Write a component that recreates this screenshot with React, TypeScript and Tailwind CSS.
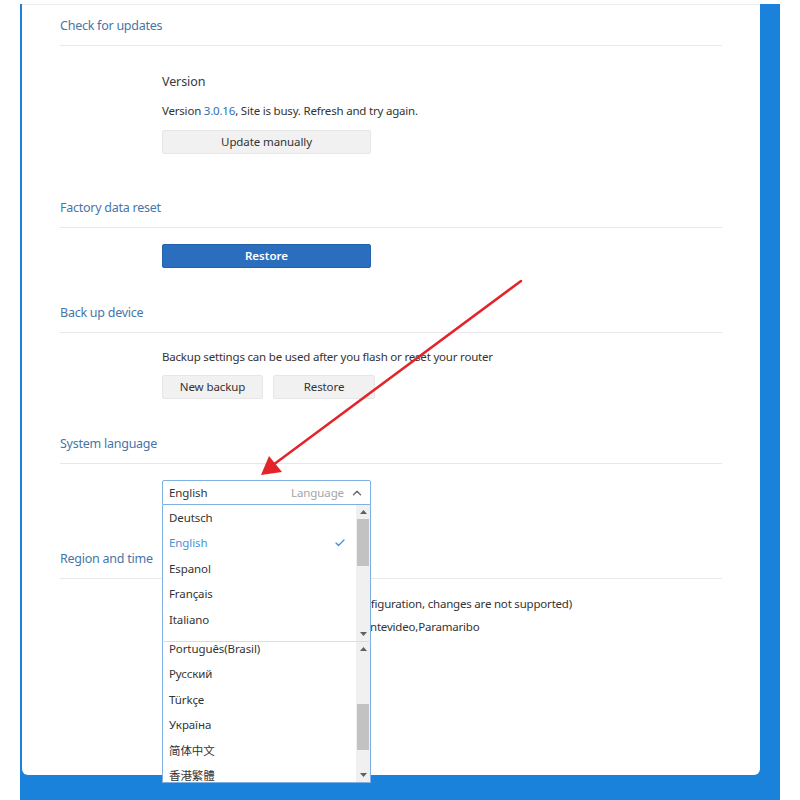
import { Check, ChevronUp } from "lucide-react";

const font = { fontFamily: '"Noto Sans", "Noto Sans CJK SC", sans-serif' };

const SectionHeader = ({ title }: { title: string }) => (
  <div className="h-[39px] flex items-center border-b border-[#e8e8e8] text-[12.5px] tracking-[-0.25px] text-[#4775a8]">
    {title}
  </div>
);

const GrayButton = ({ label, width }: { label: string; width: string }) => (
  <button
    className={`${width} h-[24px] bg-[#f1f1f1] border border-[#e6e6e6] rounded-[2px] text-[11.5px] tracking-[-0.1px] text-[#333] flex items-center justify-center`}
  >
    {label}
  </button>
);

const Arrow = ({ up }: { up?: boolean }) => (
  <svg width="7" height="4" viewBox="0 0 7 4" className="mx-auto">
    {up ? <polygon points="0,4 7,4 3.5,0" fill="#606060" /> : <polygon points="0,0 7,0 3.5,4" fill="#606060" />}
  </svg>
);

const Scrollbar = ({ thumbTop, thumbHeight }: { thumbTop: number; thumbHeight: number }) => (
  <div className="w-[14px] bg-[#f0f0f0] flex flex-col justify-between py-[5px] relative h-full">
    <Arrow up />
    <div className="absolute left-[1px] right-[1px] bg-[#c2c2c2]" style={{ top: thumbTop, height: thumbHeight }} />
    <Arrow />
  </div>
);

const Item = ({ label, active }: { label: string; active?: boolean }) => (
  <div className={`h-[25.4px] shrink-0 flex items-center justify-between pl-[6px] pr-[10px] text-[11.5px] tracking-[-0.1px] ${active ? "text-[#4a8fd6]" : "text-[#333]"}`}>
    <span>{label}</span>
    {active && <Check size={12} strokeWidth={2.5} className="text-[#4a8fd6]" />}
  </div>
);

const languagesTop = ["Deutsch", "English", "Espanol", "Français", "Italiano"];
const languagesBottom = ["Português(Brasil)", "Русский", "Türkçe", "Україна", "简体中文", "香港繁體"];

const body = "h-[20px] leading-[20px] text-[11.5px] tracking-[-0.2px] text-[#333] whitespace-nowrap";

export default function App() {
  return (
    <div className="w-[800px] h-[800px] bg-white relative overflow-hidden" style={font}>
      <div className="ml-[20px] mt-[4px] w-[760px] h-[796px] bg-[#1b82dc] pl-[2px] pr-[20px]">
        <div className="w-[738px] h-[771px] bg-white rounded-b-[6px] border-t border-[#ececec] px-[38px] pt-[2px]">
          {/* Check for updates */}
          <SectionHeader title="Check for updates" />
          <div className="pl-[102px]">
            <div className="mt-[26px] h-[20px] leading-[20px] text-[12.5px] tracking-[-0.1px] text-[#3a3a3a]">Version</div>
            <div className={`mt-[9px] ${body}`}>
              Version <span className="text-[#2f6db5]">3.0.16</span>, Site is busy. Refresh and try again.
            </div>
            <div className="mt-[9px]">
              <GrayButton label="Update manually" width="w-[209px]" />
            </div>
          </div>

          {/* Factory data reset */}
          <div className="mt-[35px]">
            <SectionHeader title="Factory data reset" />
          </div>
          <div className="pl-[102px] mt-[16px]">
            <button className="w-[209px] h-[24px] bg-[#2a6ebd] border border-[#2262ad] rounded-[2px] text-[11.5px] font-semibold text-white flex items-center justify-center">
              Restore
            </button>
          </div>

          {/* Back up device */}
          <div className="mt-[26px]">
            <SectionHeader title="Back up device" />
          </div>
          <div className="pl-[102px]">
            <div className={`mt-[14px] ${body}`}>
              Backup settings can be used after you flash or reset your router
            </div>
            <div className="mt-[8px] flex gap-[10px]">
              <GrayButton label="New backup" width="w-[101px]" />
              <GrayButton label="Restore" width="w-[102px]" />
            </div>
          </div>

          {/* System language */}
          <div className="mt-[26px]">
            <SectionHeader title="System language" />
          </div>
          <div className="pl-[102px] mt-[16px]">
            <div className="relative w-[209px]">
              <div className="h-[25px] border border-[#7eb0e2] rounded-t-[2px] flex items-center justify-between pl-[6px] pr-[6px] text-[11.5px] tracking-[-0.1px]">
                <span className="text-[#333]">English</span>
                <span className="flex items-center gap-[6px] text-[#a6a6a6]">
                  Language
                  <ChevronUp size={14} strokeWidth={2.5} className="text-[#6f6f6f]" />
                </span>
              </div>
              {/* dropdown list */}
              <div className="absolute left-0 top-[25px] w-[209px] z-10 flex flex-col">
                <div className="h-[137px] bg-white border-x border-[#7eb0e2] border-b border-b-[#dcdcdc] flex overflow-hidden">
                  <div className="flex-1 flex flex-col">
                    {languagesTop.map((l) => (
                      <Item key={l} label={l} active={l === "English"} />
                    ))}
                  </div>
                  <Scrollbar thumbTop={14} thumbHeight={47} />
                </div>
                <div className="h-[141px] bg-white border-x border-b border-[#7eb0e2] flex overflow-hidden">
                  <div className="flex-1 flex flex-col -mt-[6px]">
                    {languagesBottom.map((l) => (
                      <Item key={l} label={l} />
                    ))}
                  </div>
                  <Scrollbar thumbTop={62} thumbHeight={46} />
                </div>
              </div>
            </div>
          </div>

          {/* Region and time */}
          <div className="mt-[35px]">
            <SectionHeader title="Region and time" />
          </div>
          <div className="pl-[102px]">
            <div className={`mt-[15px] ${body}`}>
              Time zone (Keep the current system configuration, changes are not supported)
            </div>
            <div className={`mt-[3px] ${body}`}>
              (UTC-03:00) Greenland,Buenos Aires,Montevideo,Paramaribo
            </div>
          </div>
        </div>
      </div>

      {/* red annotation arrow */}
      <svg className="absolute inset-0 pointer-events-none z-20" width="800" height="800">
        <line x1="521" y1="281" x2="273" y2="465" stroke="#e3242b" strokeWidth="2.5" strokeLinecap="round" />
        <polygon points="261,475 269,456 282,472" fill="#e3242b" />
      </svg>
    </div>
  );
}
